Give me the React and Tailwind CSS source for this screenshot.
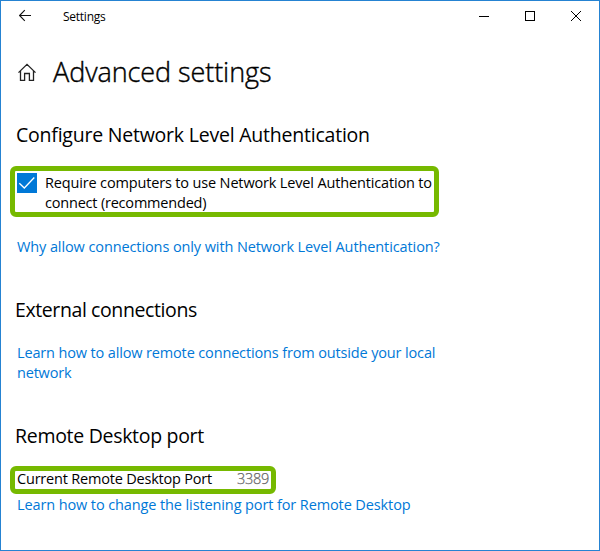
function TitleBar() {
  return (
    <header className="flex h-[31px] items-start">
      <svg className="mt-[8px] ml-[18px] shrink-0" width="13" height="13" viewBox="0 0 13 13" fill="none" stroke="#111" strokeWidth="1.1">
        <path d="M12 6.5H0.8M5.8 1.2L0.6 6.5L5.8 11.8" />
      </svg>
      <span className="mt-[6px] ml-[31px] text-[12px] leading-5 tracking-[-0.25px]">Settings</span>
      <div className="mt-[10px] mr-[18px] ml-auto flex gap-9">
        <svg width="10" height="10" viewBox="0 0 10 10" stroke="#000" shapeRendering="crispEdges">
          <path d="M0 5.5H10" />
        </svg>
        <svg width="10" height="10" viewBox="0 0 10 10" fill="none" stroke="#000" shapeRendering="crispEdges">
          <rect x="0.5" y="0.5" width="9" height="9" />
        </svg>
        <svg width="10" height="10" viewBox="0 0 10 10" stroke="#000">
          <path d="M0 0L10 10M10 0L0 10" />
        </svg>
      </div>
    </header>
  );
}

function HomeIcon() {
  return (
    <svg className="mt-[6px] shrink-0" width="18" height="18" viewBox="0 0 18 18" fill="none" stroke="#222" strokeWidth="1.3">
      <path d="M0.5 9.6L9 1.3L17.5 9.6M2.5 7.9V17.3H6.6V10.5H11.4V17.3H15.5V7.9" />
    </svg>
  );
}

function SectionTitle({ children, className }) {
  return <h2 className={`h-7 text-[19.5px] leading-7 whitespace-nowrap ${className}`}>{children}</h2>;
}

export default function App() {
  return (
    <div className="h-[551px] w-[600px] overflow-hidden border border-[#2583d2] bg-white font-['Open_Sans','Noto_Sans',sans-serif] text-[14.5px] leading-5 text-black">
      <TitleBar />
      <div className="mt-[25px] ml-[17px] flex h-9 items-start">
        <HomeIcon />
        <h1 className="ml-[17px] -mt-[3px] text-[27px] leading-9 font-light tracking-[-0.08px] whitespace-nowrap [-webkit-text-stroke:0.4px_#000]">Advanced settings</h1>
      </div>
      <SectionTitle className="mt-[28px] ml-[15px] tracking-[-0.22px]">Configure Network Level Authentication</SectionTitle>

      <div className="mt-[17px] ml-[9px] flex h-[51px] w-[429px] items-start rounded-[6px] border-[5px] border-[#76b900] pt-[2px] pl-[2px]">
        <span className="flex h-5 w-5 shrink-0 bg-[#0078d7]">
          <svg width="20" height="20" viewBox="0 0 20 20" fill="none" stroke="#fff" strokeWidth="1.3">
            <path d="M2.3 10.2L7.3 15L17.3 4.5" />
          </svg>
        </span>
        <div className="ml-2 whitespace-nowrap">
          <div className="tracking-[-0.155px]">Require computers to use Network Level Authentication to</div>
          <div className="tracking-[-0.2px]">connect (recommended)</div>
        </div>
      </div>

      <a className="mt-[20px] ml-4 block h-5 tracking-[-0.1px] whitespace-nowrap text-[#0078d7]">Why allow connections only with Network Level Authentication?</a>

      <SectionTitle className="mt-[39px] ml-[14px] tracking-[-0.4px]">External connections</SectionTitle>
      <a className="mt-[19px] ml-4 block whitespace-nowrap text-[#0078d7]">
        <span className="block tracking-[-0.145px]">Learn how to allow remote connections from outside your local</span>
        <span className="block tracking-[-0.2px]">network</span>
      </a>

      <SectionTitle className="mt-[39px] ml-[14px] tracking-[-0.3px]">Remote Desktop port</SectionTitle>
      <div className="mt-[16px] ml-[9px] flex h-[28px] w-[266px] items-start rounded-[6px] border-[5px] border-[#76b900] pl-[2px] whitespace-nowrap">
        <span className="-mt-[2px] w-[220px] tracking-[-0.2px]">Current Remote Desktop Port</span>
        <span className="-mt-[2px] font-light tracking-[-0.25px] text-[#666] [-webkit-text-stroke:0.25px_#666]">3389</span>
      </div>
      <a className="mt-px ml-4 block h-5 tracking-[-0.11px] whitespace-nowrap text-[#0078d7]">Learn how to change the listening port for Remote Desktop</a>
    </div>
  );
}
